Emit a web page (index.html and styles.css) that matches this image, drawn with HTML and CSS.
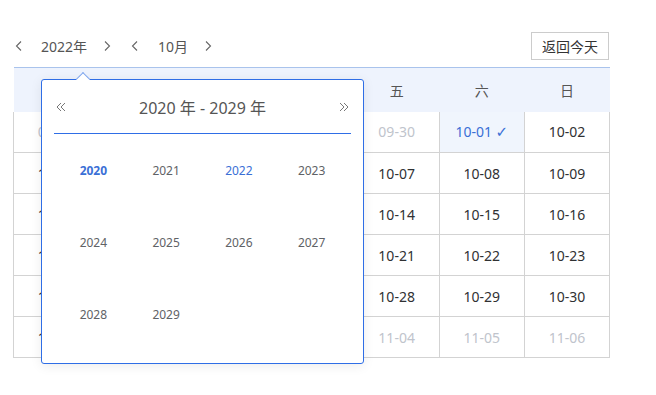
FILE: index.html
```html
<!DOCTYPE html>
<html lang="zh-CN">

<head>
  <meta charset="UTF-8">
  <meta name="viewport" content="width=device-width, initial-scale=1.0">
  <title>日历</title>
  <link rel="stylesheet" href="styles.css">
</head>

<body>
  <div class="wrap">
    <div class="toolbar">
      <div class="nav">
        <span class="arrow"><svg width="12" height="12" viewBox="0 0 12 12"><path d="M8 1.5 3.5 6 8 10.5" /></svg></span>
        <span class="nav-text">2022年</span>
        <span class="arrow arrow-gap"><svg width="12" height="12" viewBox="0 0 12 12"><path d="M4 1.5 8.5 6 4 10.5" /></svg></span>
        <span class="arrow arrow-gap2"><svg width="12" height="12" viewBox="0 0 12 12"><path d="M8 1.5 3.5 6 8 10.5" /></svg></span>
        <span class="nav-text month">10月</span>
        <span class="arrow arrow-gap3"><svg width="12" height="12" viewBox="0 0 12 12"><path d="M4 1.5 8.5 6 4 10.5" /></svg></span>
      </div>
      <button class="today-btn">返回今天</button>
    </div>

    <div class="calendar">
      <table class="grid">
        <thead>
          <tr>
            <th>一</th><th>二</th><th>三</th><th>四</th><th>五</th><th>六</th><th>日</th>
          </tr>
        </thead>
        <tbody>
          <tr>
            <td class="other">09-26</td><td class="other">09-27</td><td class="other">09-28</td><td class="other">09-29</td><td class="other">09-30</td><td class="selected">10-01 <span class="check">✓</span></td><td>10-02</td>
          </tr>
          <tr>
            <td>10-03</td><td>10-04</td><td>10-05</td><td>10-06</td><td>10-07</td><td>10-08</td><td>10-09</td>
          </tr>
          <tr>
            <td>10-10</td><td>10-11</td><td>10-12</td><td>10-13</td><td>10-14</td><td>10-15</td><td>10-16</td>
          </tr>
          <tr>
            <td>10-17</td><td>10-18</td><td>10-19</td><td>10-20</td><td>10-21</td><td>10-22</td><td>10-23</td>
          </tr>
          <tr>
            <td>10-24</td><td>10-25</td><td>10-26</td><td>10-27</td><td>10-28</td><td>10-29</td><td>10-30</td>
          </tr>
          <tr>
            <td>10-31</td><td class="other">11-01</td><td class="other">11-02</td><td class="other">11-03</td><td class="other">11-04</td><td class="other">11-05</td><td class="other">11-06</td>
          </tr>
        </tbody>
      </table>

      <div class="year-picker">
        <span class="caret"></span>
        <div class="picker-head">
          <span class="dbl"><svg width="10" height="10" viewBox="0 0 10 10"><path d="M5 1 1 5 5 9M9 1 5 5 9 9" /></svg></span>
          <span class="range">2020 年 - 2029 年</span>
          <span class="dbl"><svg width="10" height="10" viewBox="0 0 10 10"><path d="M1 1 5 5 1 9M5 1 9 5 5 9" /></svg></span>
        </div>
        <ul class="years">
          <li class="current">2020</li>
          <li>2021</li>
          <li class="active">2022</li>
          <li>2023</li>
          <li>2024</li>
          <li>2025</li>
          <li>2026</li>
          <li>2027</li>
          <li>2028</li>
          <li>2029</li>
        </ul>
      </div>
    </div>
  </div>
</body>

</html>
```

FILE: styles.css
```css
* {
  margin: 0;
  padding: 0;
  box-sizing: border-box;
}

body {
  font-family: "Noto Sans", "Noto Sans CJK SC", sans-serif;
  color: #303133;
  background: #fff;
}

.wrap {
  width: 597px;
  margin: 32px 0 0 13px;
  padding-bottom: 40px;
}

.toolbar {
  display: flex;
  justify-content: space-between;
  align-items: center;
  height: 28px;
}

.nav {
  display: flex;
  align-items: center;
  font-size: 14px;
  color: #555;
}

.arrow {
  display: flex;
  width: 12px;
  height: 12px;
}

.arrow path {
  fill: none;
  stroke: #666;
  stroke-width: 1.1;
}

.nav-text {
  margin-left: 16px;
}

.arrow-gap {
  margin-left: 14px;
}

.arrow-gap2 {
  margin-left: 16px;
}

.month {
  margin-left: 17px;
}

.arrow-gap3 {
  margin-left: 14px;
}

.today-btn {
  height: 28px;
  width: 78px;
  border: 1px solid #ccc;
  background: #fff;
  font-family: inherit;
  font-size: 14px;
  color: #333;
  margin-right: 1px;
}

.calendar {
  position: relative;
  margin-top: 7px;
}

.grid {
  width: 597px;
  border-collapse: collapse;
  table-layout: fixed;
  font-size: 14px;
}

.grid th {
  height: 44px;
  background: #eef3fd;
  border-top: 1px solid #a9c3ec;
  font-weight: normal;
  color: #555;
}

.grid td {
  height: 41px;
  text-align: center;
  border: 1px solid #d3d3d3;
  color: #303133;
}

.grid tbody tr:first-child td {
  border-top: none;
}

.grid td.other {
  color: #c0c4cc;
}

.grid td.selected {
  background: #f0f5fd;
  color: #3a6fd6;
}

.check {
  font-family: "DejaVu Sans", sans-serif;
  font-size: 15px;
}

.year-picker {
  position: absolute;
  z-index: 2;
  left: 28px;
  top: 12px;
  width: 323px;
  height: 285px;
  background: #fff;
  border: 1px solid #2f6ee6;
  border-radius: 3px;
  box-shadow: 0 2px 12px rgba(0, 0, 0, 0.08);
}

.caret {
  position: absolute;
  top: -6px;
  left: 36px;
  width: 10px;
  height: 10px;
  background: #fff;
  border-top: 1px solid #7fa6ee;
  border-left: 1px solid #7fa6ee;
  transform: rotate(45deg);
}

.picker-head {
  display: flex;
  justify-content: space-between;
  align-items: center;
  height: 54px;
  margin: 0 12px;
  padding: 0 2px 0 2px;
  border-bottom: 1px solid #2f6ee6;
}

.dbl {
  display: flex;
  width: 10px;
  height: 10px;
}

.dbl path {
  fill: none;
  stroke: #777;
  stroke-width: 1;
}

.range {
  font-size: 16px;
  color: #555;
}

.years {
  list-style: none;
  display: grid;
  grid-template-columns: repeat(4, 72.75px);
  grid-auto-rows: 72px;
  padding-left: 15px;
  font-size: 12px;
  color: #606266;
}

.years li {
  display: flex;
  align-items: center;
  justify-content: center;
}

.years .current {
  color: #3a6fd6;
  font-weight: bold;
}

.years .active {
  color: #3a6fd6;
}
```
